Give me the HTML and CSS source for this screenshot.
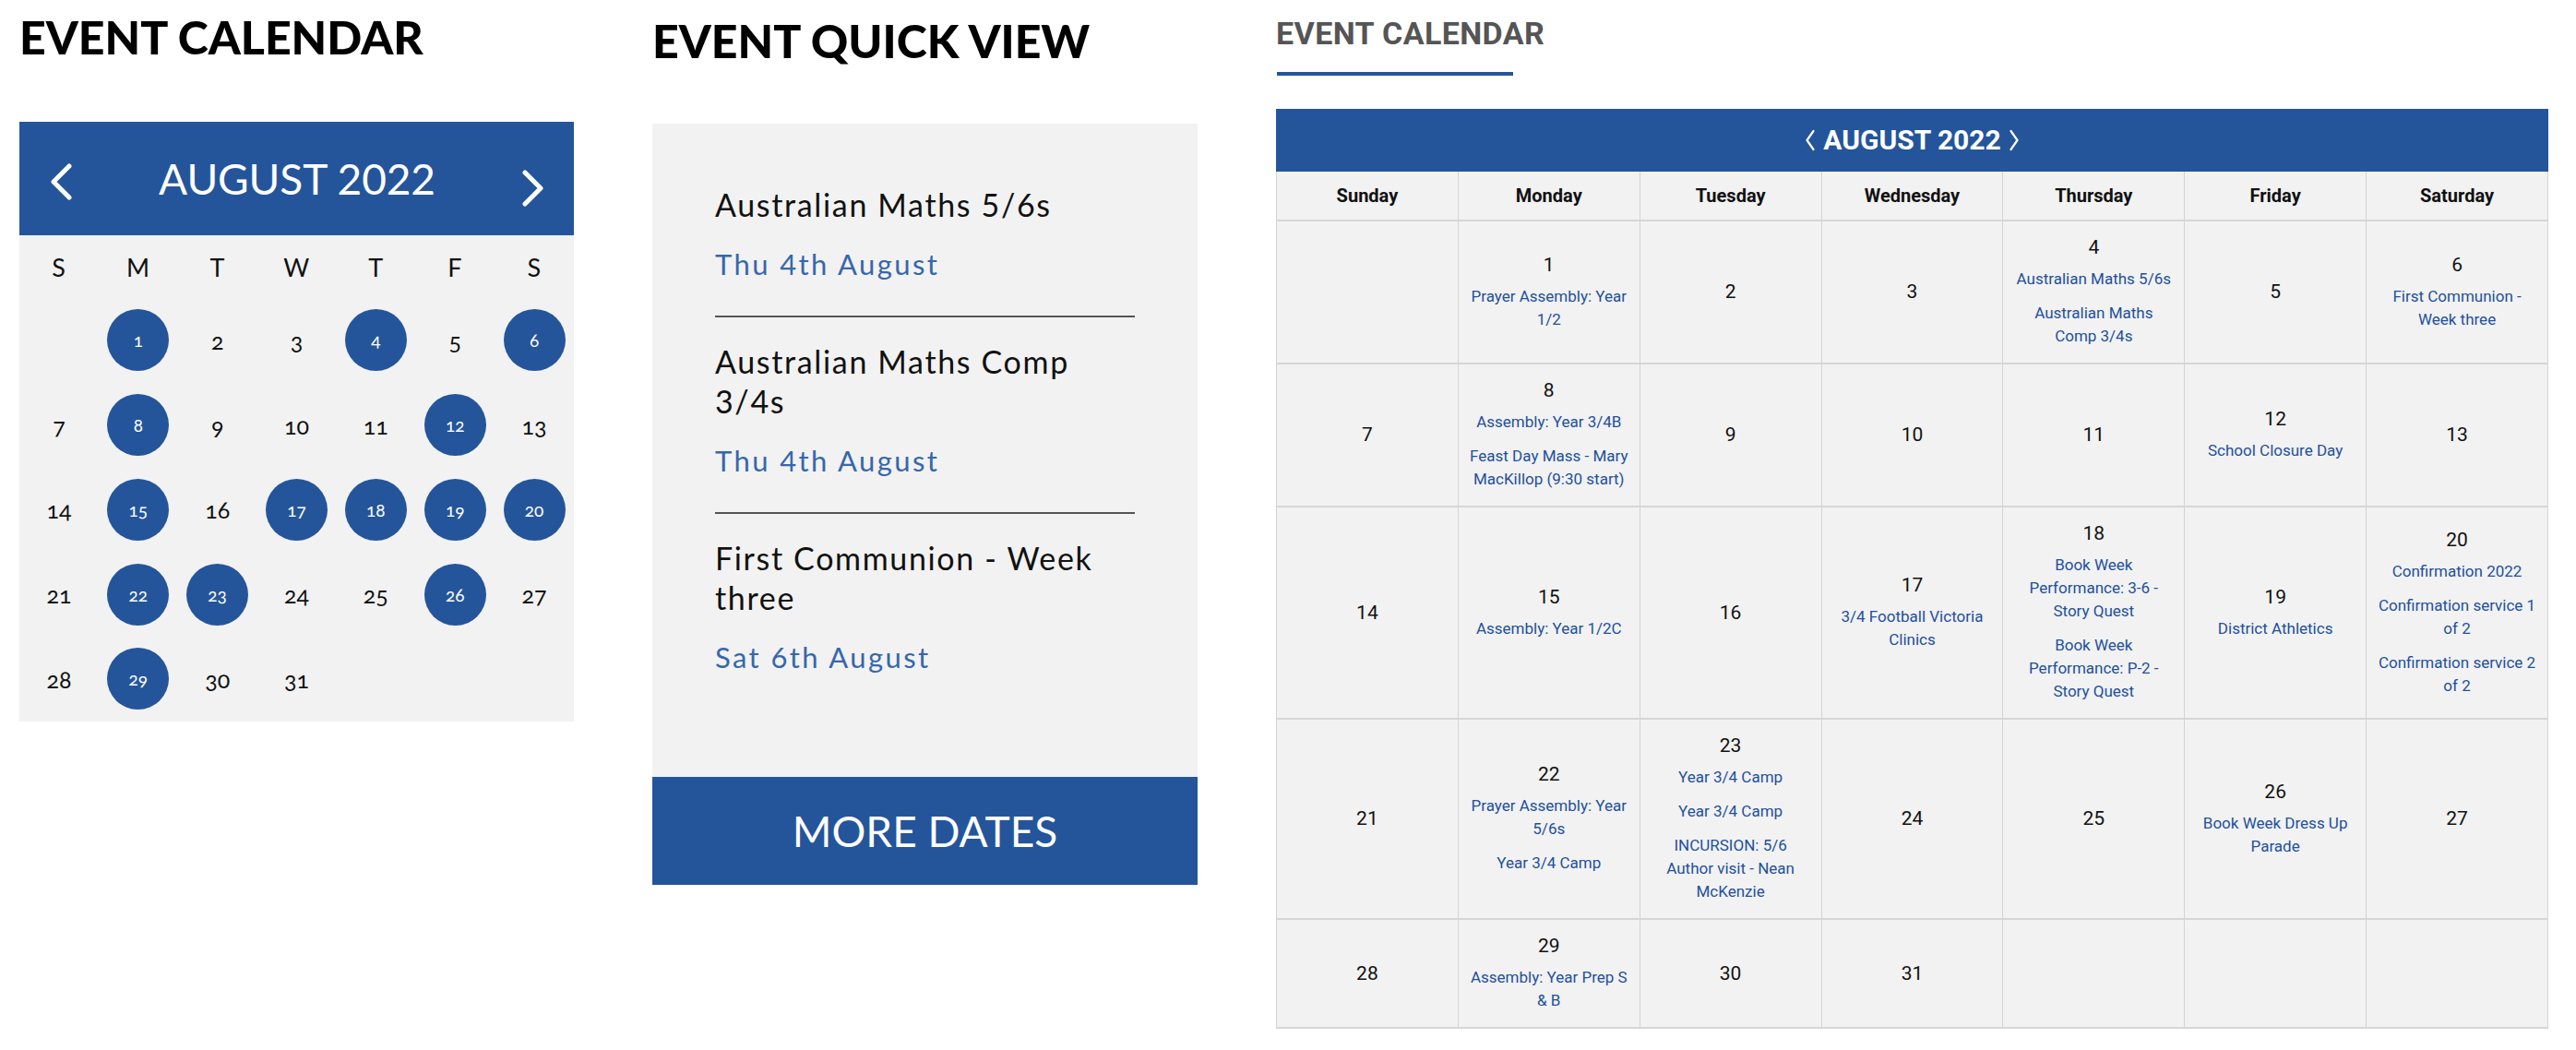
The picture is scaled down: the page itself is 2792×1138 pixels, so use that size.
FILE: index.html
```html
<!DOCTYPE html>
<html lang="en">
<head>
<meta charset="utf-8">
<title>Event Calendar</title>
<link rel="stylesheet" href="styles.css">
</head>
<body>
<div class="page">

  <section class="widget mini">
    <h2 class="heading">EVENT CALENDAR</h2>
    <div class="mini-cal">
      <div class="mini-head">
        <span class="nav nav-prev"><svg viewBox="0 0 26 40" width="26" height="40"><path d="M22 3 L5 20 L22 37" fill="none" stroke="#fff" stroke-width="5" stroke-linecap="round" stroke-linejoin="round"/></svg></span>
        <span class="mini-month">AUGUST 2022</span>
        <span class="nav nav-next"><svg viewBox="0 0 26 40" width="26" height="40"><path d="M4 3 L21 20 L4 37" fill="none" stroke="#fff" stroke-width="5" stroke-linecap="round" stroke-linejoin="round"/></svg></span>
      </div>
      <div class="mini-grid">
        <div class="dow">S</div><div class="dow">M</div><div class="dow">T</div><div class="dow">W</div><div class="dow">T</div><div class="dow">F</div><div class="dow">S</div>

        <div class="day"></div>
        <div class="day"><span class="dot">1</span></div>
        <div class="day">2</div>
        <div class="day">3</div>
        <div class="day"><span class="dot">4</span></div>
        <div class="day">5</div>
        <div class="day"><span class="dot">6</span></div>

        <div class="day">7</div>
        <div class="day"><span class="dot">8</span></div>
        <div class="day">9</div>
        <div class="day">10</div>
        <div class="day">11</div>
        <div class="day"><span class="dot">12</span></div>
        <div class="day">13</div>

        <div class="day">14</div>
        <div class="day"><span class="dot">15</span></div>
        <div class="day">16</div>
        <div class="day"><span class="dot">17</span></div>
        <div class="day"><span class="dot">18</span></div>
        <div class="day"><span class="dot">19</span></div>
        <div class="day"><span class="dot">20</span></div>

        <div class="day">21</div>
        <div class="day"><span class="dot">22</span></div>
        <div class="day"><span class="dot">23</span></div>
        <div class="day">24</div>
        <div class="day">25</div>
        <div class="day"><span class="dot">26</span></div>
        <div class="day">27</div>

        <div class="day">28</div>
        <div class="day"><span class="dot">29</span></div>
        <div class="day">30</div>
        <div class="day">31</div>
        <div class="day"></div>
        <div class="day"></div>
        <div class="day"></div>
      </div>
    </div>
  </section>

  <section class="widget quick">
    <h2 class="heading">EVENT QUICK VIEW</h2>
    <div class="qv-box">
      <ul class="qv-list">
        <li class="qv-item">
          <div class="qv-title">Australian Maths 5/6s</div>
          <div class="qv-date">Thu 4th August</div>
        </li>
        <li class="qv-item">
          <div class="qv-title">Australian Maths Comp 3/4s</div>
          <div class="qv-date">Thu 4th August</div>
        </li>
        <li class="qv-item">
          <div class="qv-title">First Communion - Week three</div>
          <div class="qv-date">Sat 6th August</div>
        </li>
      </ul>
      <a class="qv-more" href="#">MORE DATES</a>
    </div>
  </section>

  <section class="widget full">
    <h2 class="full-title">EVENT CALENDAR</h2>
    <div class="full-rule"></div>
    <div class="full-head">
      <svg class="full-nav" viewBox="0 0 12 24" width="12" height="24"><path d="M9.5 2 L2.5 12 L9.5 22" fill="none" stroke="#fff" stroke-width="2.2" stroke-linecap="round" stroke-linejoin="round"/></svg>
      <span class="full-month">AUGUST 2022</span>
      <svg class="full-nav" viewBox="0 0 12 24" width="12" height="24"><path d="M2.5 2 L9.5 12 L2.5 22" fill="none" stroke="#fff" stroke-width="2.2" stroke-linecap="round" stroke-linejoin="round"/></svg>
    </div>
    <table class="full-cal">
      <thead>
        <tr><th>Sunday</th><th>Monday</th><th>Tuesday</th><th>Wednesday</th><th>Thursday</th><th>Friday</th><th>Saturday</th></tr>
      </thead>
      <tbody>
        <tr>
          <td></td>
          <td><div class="num">1</div><a class="ev" href="#">Prayer Assembly: Year 1/2</a></td>
          <td><div class="num">2</div></td>
          <td><div class="num">3</div></td>
          <td><div class="num">4</div><a class="ev" href="#">Australian Maths 5/6s</a><a class="ev" href="#">Australian Maths Comp 3/4s</a></td>
          <td><div class="num">5</div></td>
          <td><div class="num">6</div><a class="ev" href="#">First Communion - Week three</a></td>
        </tr>
        <tr>
          <td><div class="num">7</div></td>
          <td><div class="num">8</div><a class="ev" href="#">Assembly: Year 3/4B</a><a class="ev" href="#">Feast Day Mass - Mary MacKillop (9:30 start)</a></td>
          <td><div class="num">9</div></td>
          <td><div class="num">10</div></td>
          <td><div class="num">11</div></td>
          <td><div class="num">12</div><a class="ev" href="#">School Closure Day</a></td>
          <td><div class="num">13</div></td>
        </tr>
        <tr>
          <td><div class="num">14</div></td>
          <td><div class="num">15</div><a class="ev" href="#">Assembly: Year 1/2C</a></td>
          <td><div class="num">16</div></td>
          <td><div class="num">17</div><a class="ev" href="#">3/4 Football Victoria Clinics</a></td>
          <td><div class="num">18</div><a class="ev" href="#">Book Week Performance: 3-6 - Story Quest</a><a class="ev" href="#">Book Week Performance: P-2 - Story Quest</a></td>
          <td><div class="num">19</div><a class="ev" href="#">District Athletics</a></td>
          <td><div class="num">20</div><a class="ev" href="#">Confirmation 2022</a><a class="ev" href="#">Confirmation service 1 of 2</a><a class="ev" href="#">Confirmation service 2 of 2</a></td>
        </tr>
        <tr>
          <td><div class="num">21</div></td>
          <td><div class="num">22</div><a class="ev" href="#">Prayer Assembly: Year 5/6s</a><a class="ev" href="#">Year 3/4 Camp</a></td>
          <td><div class="num">23</div><a class="ev" href="#">Year 3/4 Camp</a><a class="ev" href="#">Year 3/4 Camp</a><a class="ev" href="#">INCURSION: 5/6 Author visit - Nean McKenzie</a></td>
          <td><div class="num">24</div></td>
          <td><div class="num">25</div></td>
          <td><div class="num">26</div><a class="ev" href="#">Book Week Dress Up Parade</a></td>
          <td><div class="num">27</div></td>
        </tr>
        <tr>
          <td><div class="num">28</div></td>
          <td><div class="num">29</div><a class="ev" href="#">Assembly: Year Prep S &amp; B</a></td>
          <td><div class="num">30</div></td>
          <td><div class="num">31</div></td>
          <td></td>
          <td></td>
          <td></td>
        </tr>
      </tbody>
    </table>
  </section>

</div>
</body>
</html>
```

FILE: styles.css
```css
* { box-sizing: border-box; }

html, body {
  margin: 0;
  padding: 0;
  background: #fff;
}

body {
  font-family: "Lato", "Open Sans", sans-serif;
  color: #111;
}

.page {
  display: grid;
  grid-template-columns: 601px 591px 1379px;
  column-gap: 85px;
  align-items: start;
  padding-left: 21px;
}

/* ---------- shared heading ---------- */
.heading {
  margin: 0;
  font-family: "Lato", sans-serif;
  font-weight: 900;
  font-size: 50px;
  line-height: 60px;
  letter-spacing: 0;
  color: #000;
}

/* ---------- mini calendar ---------- */
.mini { padding-top: 10px; }
.mini .heading { margin-bottom: 62px; }

.mini-head {
  height: 123px;
  background: #24559b;
  display: flex;
  align-items: center;
  justify-content: space-between;
  padding: 0 31px 0 32px;
  color: #fff;
}

.nav { display: flex; }
.nav-prev { margin-top: 6px; }
.nav-next { margin-top: 20px; }

.mini-month {
  font-size: 46px;
  font-weight: 400;
  line-height: 1;
  letter-spacing: -0.1px;
}

.mini-grid {
  background: #f2f2f2;
  display: grid;
  grid-template-columns: repeat(7, 1fr);
  grid-template-rows: 68px repeat(5, 91.75px);
  font-variant-numeric: oldstyle-nums;
}

.dow {
  display: flex;
  align-items: center;
  justify-content: center;
  font-size: 27px;
  letter-spacing: 0.5px;
}

.day {
  display: flex;
  align-items: center;
  justify-content: center;
  font-size: 25px;
}

.dot {
  width: 67px;
  height: 67px;
  border-radius: 50%;
  background: #24559b;
  color: #fff;
  font-size: 19px;
  display: flex;
  align-items: center;
  justify-content: center;
}

/* ---------- quick view ---------- */
.quick { padding-top: 14px; }
.quick .heading { margin-bottom: 60px; }

.qv-box { background: #f2f2f2; }

.qv-list {
  list-style: none;
  margin: 0;
  height: 708px;
  padding: 66px 68px 0;
}

.qv-item {
  padding-bottom: 36px;
  border-bottom: 2px solid #555;
  margin-bottom: 26px;
}

.qv-item:last-child {
  border-bottom: 0;
  margin-bottom: 0;
}

.qv-title {
  font-size: 34px;
  line-height: 43px;
  letter-spacing: 1.65px;
  color: #111;
  margin-bottom: 23px;
}

.qv-date {
  font-size: 31px;
  line-height: 40px;
  letter-spacing: 2.4px;
  color: #3767ab;
}

.qv-more {
  display: flex;
  align-items: center;
  justify-content: center;
  height: 117px;
  background: #24559b;
  color: #fff;
  text-decoration: none;
  font-size: 46px;
  letter-spacing: 0;
}

/* ---------- full calendar ---------- */
.full {
  padding-top: 16px;
  font-family: "Roboto", "Liberation Sans", sans-serif;
}

.full-title {
  margin: 0;
  font-size: 34px;
  font-weight: 700;
  line-height: 40px;
  letter-spacing: 0.4px;
  color: #555;
}

.full-rule {
  width: 256px;
  height: 4px;
  background: #24559b;
  margin: 22px 0 36px 1px;
}

.full-head {
  height: 68px;
  background: #24559b;
  color: #fff;
  display: flex;
  align-items: center;
  justify-content: center;
  gap: 8px;
}

.full-month {
  font-size: 30px;
  font-weight: 700;
  line-height: 1;
}

.full-cal {
  width: 1379px;
  border-collapse: collapse;
  table-layout: fixed;
  background: #f2f2f2;
  color: #111;
}

.full-cal th,
.full-cal td {
  border-left: 1px solid #d3d3d3;
  border-right: 1px solid #d3d3d3;
  border-top: 2px solid #d6d6d6;
  border-bottom: 2px solid #d6d6d6;
  text-align: center;
  vertical-align: middle;
}

.full-cal thead th {
  border-top: 0;
  font-size: 20px;
  font-weight: 700;
  line-height: 24px;
  padding: 14px 4px;
}

.full-cal td {
  padding: 16px 11px;
}

.num {
  font-size: 21px;
  line-height: 25px;
  margin-bottom: 9px;
}

.num:only-child { margin-bottom: 0; }

.ev {
  display: block;
  font-size: 17px;
  line-height: 25px;
  color: #22509c;
  text-decoration: none;
}

.ev + .ev { margin-top: 12px; }
```
